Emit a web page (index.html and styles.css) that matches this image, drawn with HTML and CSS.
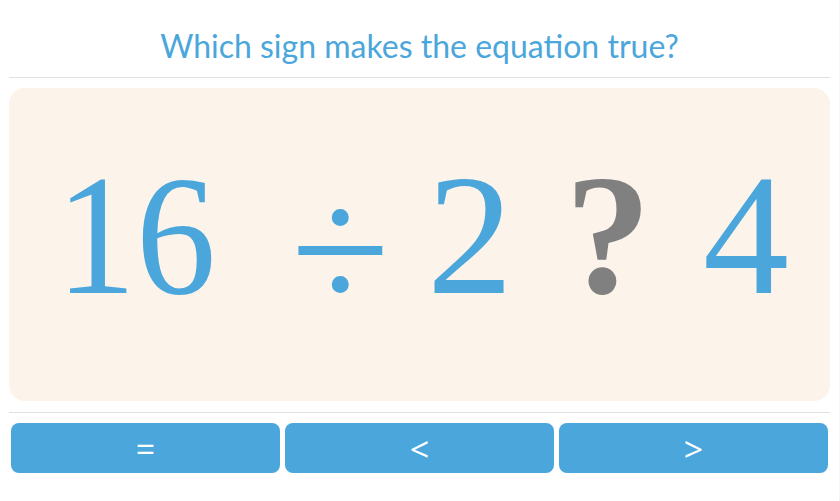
FILE: index.html
```
<!DOCTYPE html>
<html>
<head>
<meta charset="utf-8">
<link rel="stylesheet" href="styles.css">
</head>
<body>
<div class="page">
  <header class="header">
    <h1 class="title">Which sign makes the equation true?</h1>
  </header>
  <section class="panel">
    <div class="equation">
      <span class="term t-num1">16</span>
      <span class="term t-op">÷</span>
      <span class="term t-num2">2</span>
      <span class="term t-q">?</span>
      <span class="term t-num3">4</span>
    </div>
  </section>
  <div class="divider"></div>
  <div class="answers">
    <button class="answer">=</button>
    <button class="answer">&lt;</button>
    <button class="answer">&gt;</button>
  </div>
</div>
</body>
</html>
```
FILE: styles.css
```
html, body {
  margin: 0;
  padding: 0;
  background: #ffffff;
}
body {
  width: 840px;
  height: 501px;
  overflow: hidden;
  border-right: 1px dotted #eeeeee;
  box-sizing: border-box;
}
.page {
  padding: 0 9px 0 9px;
  display: flex;
  flex-direction: column;
}
.header {
  height: 77px;
  border-bottom: 1px solid #e0e0e0;
  display: flex;
  align-items: center;
  justify-content: center;
}
.title {
  margin: 0;
  padding-top: 14px;
  font-family: Lato, "Open Sans", sans-serif;
  font-weight: 400;
  font-size: 32px;
  color: #4aa6db;
}
.panel {
  margin-top: 10px;
  height: 313px;
  border-radius: 16px;
  background: #fcf3ea;
  display: flex;
  align-items: center;
  justify-content: center;
}
.equation {
  display: flex;
  align-items: baseline;
  font-family: "Liberation Serif", "Times New Roman", serif;
  font-size: 172px;
  line-height: 1;
  color: #4aa6db;
  margin-top: -24px;
}
.t-num1 { transform: scaleX(0.93); }
.t-op {
  margin-left: 69px;
  font-size: 180px;
  transform: translateY(18px);
}
.t-num2 { margin-left: 37px; }
.t-q { margin-left: 52px; color: #808080; font-weight: 700; }
.t-num3 { margin-left: 52px; }
.divider {
  margin-top: 11px;
  height: 1px;
  background: #e0e0e0;
}
.answers {
  margin-top: 10px;
  padding: 0 2px;
  display: flex;
  gap: 5px;
}
.answer {
  flex: 1;
  height: 50px;
  border: none;
  border-radius: 8px;
  background: #4aa6db;
  color: #ffffff;
  font-family: "Open Sans", Lato, sans-serif;
  font-size: 34px;
  line-height: 1;
  padding: 0;
  padding-top: 2px;
}
```
